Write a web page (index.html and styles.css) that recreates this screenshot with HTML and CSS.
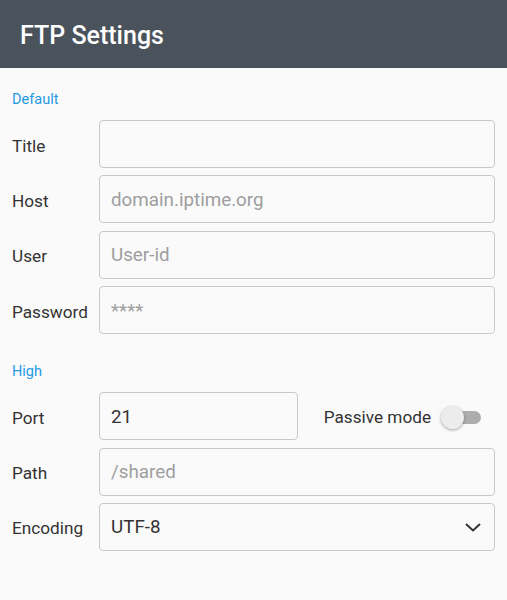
FILE: index.html
```html
<!DOCTYPE html>
<html lang="en">
<head>
<meta charset="utf-8">
<title>FTP Settings</title>
<link rel="stylesheet" href="styles.css">
</head>
<body>
<header class="appbar">
  <h1 class="appbar-title">FTP Settings</h1>
</header>
<main class="form">
  <section class="group">
    <h2 class="group-title">Default</h2>
    <div class="rows">
      <label class="row"><span class="label">Title</span><input class="field" type="text"></label>
      <label class="row"><span class="label">Host</span><input class="field" type="text" placeholder="domain.iptime.org"></label>
      <label class="row"><span class="label">User</span><input class="field" type="text" placeholder="User-id"></label>
      <label class="row"><span class="label">Password</span><input class="field" type="text" placeholder="****"></label>
    </div>
  </section>
  <section class="group">
    <h2 class="group-title">High</h2>
    <div class="rows">
      <div class="row">
        <span class="label">Port</span>
        <div class="port-line">
          <input class="field port-field" type="text" value="21">
          <div class="passive">
            <span class="passive-label">Passive mode</span>
            <span class="switch"><span class="switch-track"></span><span class="switch-thumb"></span></span>
          </div>
        </div>
      </div>
      <label class="row"><span class="label">Path</span><input class="field" type="text" placeholder="/shared"></label>
      <div class="row">
        <span class="label">Encoding</span>
        <div class="select-wrap">
          <div class="field select-field">UTF-8</div>
          <svg class="chevron" width="16" height="9" viewBox="0 0 16 9"><path d="M1 1 L8 7.5 L15 1" fill="none" stroke="#333" stroke-width="2"/></svg>
        </div>
      </div>
    </div>
  </section>
</main>
</body>
</html>
```

FILE: styles.css
```css
* { box-sizing: border-box; }
html, body { margin: 0; padding: 0; }
body {
  background: #fafafa;
  font-family: Roboto, "Noto Sans", sans-serif;
  color: #333;
  width: 507px;
  height: 600px;
  overflow: hidden;
}
.appbar {
  height: 68px;
  background: #4a535c;
  display: flex;
  align-items: center;
  padding: 3px 20px 0;
}
.appbar-title {
  margin: 0;
  color: #fff;
  font-size: 25px;
  font-weight: 500;
}
.group-title {
  margin: 22px 0 10px 12px;
  font-size: 14.5px;
  font-weight: 400;
  line-height: 20px;
  color: #2499e3;
}
.group + .group .group-title { margin-top: 28px; margin-bottom: 10px; }
.rows {
  display: flex;
  flex-direction: column;
  gap: 7.4px;
}
.row {
  display: grid;
  grid-template-columns: 87px 1fr;
  align-items: center;
  padding: 0 12px;
}
.label {
  font-size: 17.2px;
  color: #333;
  padding-top: 3px;
}
.field {
  height: 48px;
  width: 100%;
  border: 1px solid #c9c9c9;
  border-radius: 4px;
  background: #fafafa;
  padding: 1px 11px 0;
  font-family: Roboto, "Noto Sans", sans-serif;
  font-size: 18.8px;
  color: #333;
  outline: none;
}
.field::placeholder { color: #9e9e9e; }
.port-line {
  display: flex;
  align-items: center;
}
.port-field { width: 199px; flex: none; }
.passive {
  margin-left: auto;
  margin-right: 14px;
  display: flex;
  align-items: center;
  gap: 10px;
  padding-top: 2px;
}
.passive-label { font-size: 17.2px; color: #333; }
.switch {
  position: relative;
  width: 40px;
  height: 23px;
  display: block;
}
.switch-track {
  position: absolute;
  right: 0;
  top: 5px;
  width: 36px;
  height: 13px;
  border-radius: 7px;
  background: #adadad;
}
.switch-thumb {
  position: absolute;
  left: 0;
  top: 0;
  width: 23px;
  height: 23px;
  border-radius: 50%;
  background: #ececec;
  box-shadow: 0 1px 3px rgba(0,0,0,0.35);
}
.select-wrap { position: relative; }
.select-field {
  display: flex;
  align-items: center;
}
.chevron {
  position: absolute;
  right: 14px;
  top: 20px;
}
```
